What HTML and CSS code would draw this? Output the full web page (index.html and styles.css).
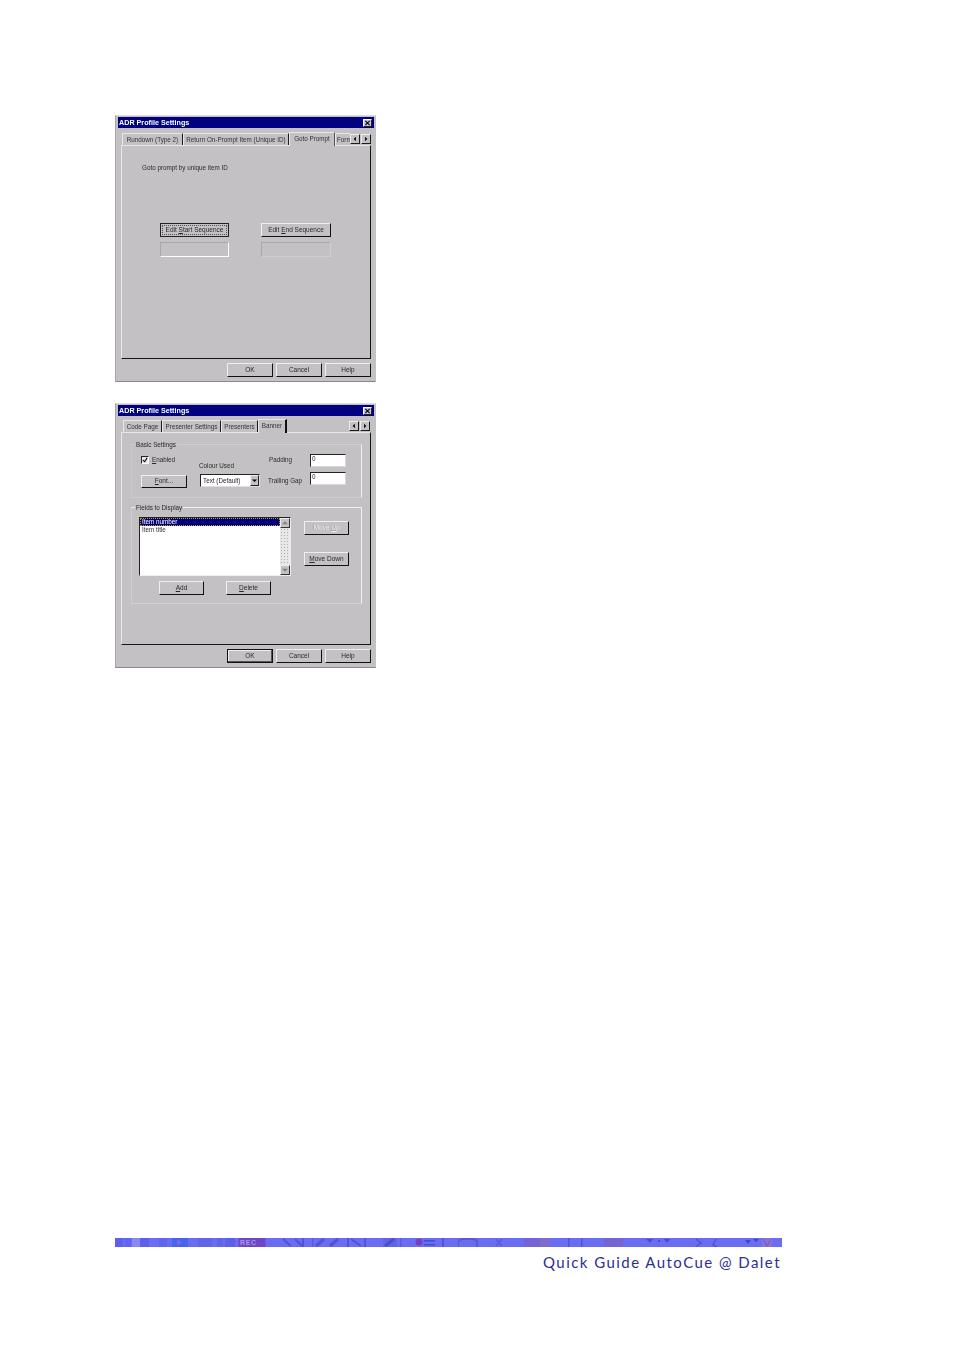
FILE: index.html
```html
<!DOCTYPE html>
<html lang="en">
<head>
<meta charset="utf-8">
<title>Quick Guide AutoCue @ Dalet</title>
<link rel="stylesheet" href="styles.css">
</head>
<body>
<main class="page">
  <section class="dialog dialog-one">
    <div class="titlebar"><span>ADR Profile Settings</span><span class="close"><svg viewBox="0 0 7 7"><path d="M1 1l5 5M6 1l-5 5" stroke="#000" stroke-width="1.2" fill="none"/></svg></span></div>
    <div class="tabs tabs-one">
      <div class="tab w60">Rundown (Type 2)</div>
      <div class="tab w106">Return On-Prompt Item (Unique ID)</div>
      <div class="tab active w45">Goto Prompt</div>
      <div class="tab w15 clipped">Form</div>
      <div class="arrows"><span class="arrow"><svg viewBox="0 0 9 9"><path d="M5.5 2v5L3 4.500z"/></svg></span><span class="arrow"><svg viewBox="0 0 9 9"><path d="M3.500 2v5L6 4.500z"/></svg></span></div>
    </div>
    <div class="panel panel-one">
      <p class="intro">Goto prompt by unique item ID</p>
      <div class="seq-grid">
        <button class="btn focused"><span class="focus-ring"><span>Edit <u>S</u>tart Sequence</span></span></button>
        <button class="btn"><span>Edit <u>E</u>nd Sequence</span></button>
        <div class="seq-field white-edge"></div>
        <div class="seq-field"></div>
      </div>
    </div>
    <div class="footer-buttons">
      <button class="btn b45">OK</button>
      <button class="btn b46">Cancel</button>
      <button class="btn b46">Help</button>
    </div>
  </section>

  <section class="dialog dialog-two">
    <div class="titlebar"><span>ADR Profile Settings</span><span class="close"><svg viewBox="0 0 7 7"><path d="M1 1l5 5M6 1l-5 5" stroke="#000" stroke-width="1.2" fill="none"/></svg></span></div>
    <div class="tabs tabs-two">
      <div class="tab w38">Code Page</div>
      <div class="tab w59">Presenter Settings</div>
      <div class="tab w37">Presenters</div>
      <div class="tab active w29 strong-edge">Banner</div>
      <div class="arrows"><span class="arrow"><svg viewBox="0 0 9 9"><path d="M5.500 2v5L3 4.500z"/></svg></span><span class="arrow"><svg viewBox="0 0 9 9"><path d="M3.500 2v5L6 4.500z"/></svg></span></div>
    </div>
    <div class="panel panel-two">
      <div class="group basic">
        <span class="legend">Basic Settings</span>
        <div class="basic-grid">
          <label class="check"><span class="checkbox"><svg viewBox="0 0 7 7"><path d="M1 3.500l2 2L6 1" stroke="#000" stroke-width="1.200" fill="none"/></svg></span><span><u>E</u>nabled</span></label>
          <span class="colour-label">Colour Used</span>
          <span class="padding-label">Padding</span>
          <div class="input input-a">0</div>
          <button class="btn font-btn"><span><u>F</u>ont...</span></button>
          <div class="select"><span>Text (Default)</span><span class="drop"><svg viewBox="0 0 7 7"><path d="M1 2.500h5L3.500 5z"/></svg></span></div>
          <span class="gap-label">Trailing Gap</span>
          <div class="input input-b">0</div>
        </div>
      </div>
      <div class="group fields">
        <span class="legend">Fields to Display</span>
        <div class="fields-grid">
          <div class="listbox">
            <div class="list-items">
              <div class="item selected">Item number</div>
              <div class="item">Item title</div>
            </div>
            <div class="scroll">
              <span class="sbtn"><svg viewBox="0 0 7 7"><path d="M1 4.500h5L3.500 2z" fill="#808080"/></svg></span>
              <span class="track"></span>
              <span class="sbtn"><svg viewBox="0 0 7 7"><path d="M1 2.500h5L3.500 5z" fill="#808080"/></svg></span>
            </div>
          </div>
          <div class="move-col">
            <button class="btn disabled"><span>Move <u>U</u>p</span></button>
            <button class="btn"><span><u>M</u>ove Down</span></button>
          </div>
          <div class="add-row">
            <button class="btn"><span><u>A</u>dd</span></button>
            <button class="btn"><span><u>D</u>elete</span></button>
          </div>
        </div>
      </div>
    </div>
    <div class="footer-buttons">
      <button class="btn b45 dark-edge">OK</button>
      <button class="btn b46">Cancel</button>
      <button class="btn b46">Help</button>
    </div>
  </section>

  <div class="band">
    <svg viewBox="0 0 667 9" preserveAspectRatio="none">
      <rect width="667" height="9" fill="#6a6cf4"/>
      <g class="band-art">
      <rect x="0" y="-3" width="8" height="15" fill="#5c60ec"/><rect x="10" y="-3" width="6" height="15" fill="#6064ee"/>
      <rect x="17" y="-3" width="8" height="15" fill="#8888f4"/><rect x="25" y="-3" width="9" height="15" fill="#5c60ec"/>
      <rect x="44" y="-3" width="8" height="15" fill="#6064ee"/><rect x="57" y="-3" width="16" height="15" fill="#4464f2"/>
      <path d="M62 1l6 3.500-6 3.500z" fill="#7a66e0"/>
      <rect x="83" y="-3" width="14" height="15" fill="#6064ea"/><rect x="102" y="-3" width="6" height="15" fill="#6064ea"/>
      <rect x="110" y="-3" width="10" height="15" fill="#5c60e8"/>
      <rect x="123.500" y="-3" width="27" height="15" fill="#6f46c8"/>
      <text x="125" y="7" class="rec">REC</text>
      <path d="M168 1l8 7M180 1l7 7" stroke="#5252d8" stroke-width="2" fill="none"/>
      <rect x="187" y="-3" width="2" height="15" fill="#5252d8"/>
      <path d="M201 8l8-7M215 8l8-7" stroke="#5252d8" stroke-width="3" fill="none"/>
      <rect x="197" y="-3" width="1.500" height="15" fill="#5a5ae0"/>
      <path d="M236 1l10 7" stroke="#5252d8" stroke-width="2" fill="none"/>
      <rect x="232" y="-3" width="2" height="15" fill="#5252d8"/><rect x="249" y="-3" width="2" height="15" fill="#5252d8"/>
      <rect x="268" y="-3" width="14" height="15" fill="#6064e8"/><path d="M270 8l9-7" stroke="#4c4cd0" stroke-width="3" fill="none"/>
      <rect x="285" y="-3" width="1.500" height="15" fill="#5a5ae0"/>
      <circle cx="304" cy="4" r="3.500" fill="#7a40bc"/><rect x="309" y="2" width="11" height="1.500" fill="#3a50d8"/><rect x="309" y="6" width="11" height="1.500" fill="#3a50d8"/>
      <rect x="327" y="-3" width="2" height="15" fill="#5252d8"/>
      <path d="M343 9v-5q0-4 6-4h8q6 0 6 4v5h-2v-4q0-3-5-3h-7q-5 0-5 3v4z" fill="#5a5ad0"/>
      <path d="M381 1l6 7M387 1l-6 7" stroke="#5a5ad8" stroke-width="1.500" fill="none"/>
      <rect x="409" y="-3" width="16" height="15" fill="#7464d8"/><rect x="425" y="-3" width="10" height="15" fill="#7e6ccc"/>
      <rect x="453" y="-3" width="1.500" height="15" fill="#5252d8"/><rect x="466" y="-3" width="1.500" height="15" fill="#5252d8"/>
      <rect x="489" y="-3" width="19" height="15" fill="#7464d4"/>
      <path d="M531 1h7l-3 4zM543 2h2v2h-2zM549 1h6l-3 4z" fill="#4a4ad0"/>
      <path d="M581 1l5 4-5 4M601 1l-3 6 4 2" stroke="#5252d8" stroke-width="1.500" fill="none"/>
      <path d="M630 2l3 4 3-4zM638 1l3 3 3-3z" fill="#4444c8"/>
      <rect x="647" y="-3" width="10" height="15" fill="#8a70d8"/><path d="M648 1l4 7 4-7" stroke="#7058cc" fill="none"/>
      </g>
    </svg>
  </div>
  <p class="guide">Quick Guide AutoCue @ Dalet</p>
</main>
</body>
</html>
```

FILE: styles.css
```css
* { box-sizing: border-box; }
html, body { margin: 0; padding: 0; background: #fff; }
body { width: 954px; height: 1351px; overflow: hidden; }
.page { padding: 115px 172px 0 115px; }

button { font: inherit; color: inherit; padding: 0; margin: 0; }

.dialog {
  width: 261px;
  background: #c4c1c4;
  border-left: 1px solid #a8a6a8;
  border-bottom: 1px solid #8a888a;
  border-top: 1px solid #dedcde;
  border-right: 1px solid #c4c1c4;
  padding: 1px 1px 0 1px;
  font-family: "Liberation Sans", Arial, sans-serif;
  font-size: 6.3px;
  line-height: 8px;
  color: #2a2a2a;
  filter: blur(0.35px);
}
.dialog-one { height: 267px; }
.dialog-two { height: 265px; margin-top: 21px; }

.titlebar {
  height: 11px;
  margin-left: 1px;
  background: #000080;
  color: #fff;
  font-weight: 700;
  font-size: 7.2px;
  line-height: 11px;
  padding: 0 2px 0 1px;
  display: flex;
  justify-content: space-between;
  align-items: center;
}
.close {
  width: 9px;
  height: 8px;
  background: #c4c1c4;
  border: 1px solid;
  border-color: #fff #222 #222 #fff;
  display: flex;
}
.close svg { width: 7px; height: 6px; display: block; }

.tabs {
  display: flex;
  align-items: flex-end;
  position: relative;
  z-index: 1;
}
.tabs-one { height: 17px; margin-left: 5px; width: 249px; }
.tabs-two { height: 16px; margin-left: 6px; width: 247px; }
.tab {
  height: 12px;
  border-top: 1px solid #e8e6e8;
  border-left: 1px solid #e8e6e8;
  border-right: 1px solid #1c1c1c;
  text-align: center;
  line-height: 12px;
  white-space: nowrap;
  flex: none;
  color: #333;
}
.tab.active {
  height: 14px;
  margin-bottom: -1px;
  background: #c4c1c4;
  position: relative;
  line-height: 11px;
  border-right-color: #555;
}
.tab.strong-edge { border-right: 2px solid #111; }
.tab.clipped { text-align: left; padding-left: 1px; border-right: 0; }
.w60 { width: 61px; }
.w106 { width: 106px; }
.w45 { width: 46px; }
.w15 { width: 15px; }
.w38 { width: 39px; }
.w59 { width: 59px; }
.w37 { width: 37px; }
.w29 { width: 29px; }

.arrows { display: flex; gap: 1px; margin-left: auto; margin-bottom: 1px; }
.arrow {
  width: 10px;
  height: 10px;
  background: #c4c1c4;
  border: 1px solid;
  border-color: #eee #1c1c1c #1c1c1c #eee;
  display: flex;
}
.arrow svg { width: 8px; height: 8px; display: block; fill: #000; }

.panel {
  margin-left: 4px;
  width: 250px;
  border: 1px solid;
  border-color: #e8e6e8 #151515 #151515 #e8e6e8;
}
.panel-one { height: 214px; padding: 17px 0 0 20px; }
.panel-two { height: 213px; padding: 11px 0 0 9px; }
.intro { margin: 0; line-height: 10px; }

.seq-grid {
  display: grid;
  grid-template-columns: 69px 70px;
  grid-template-rows: 14px 15px;
  column-gap: 32px;
  row-gap: 5px;
  margin: 50px 0 0 18px;
}
.btn {
  display: flex;
  align-items: center;
  justify-content: center;
  background: #c4c1c4;
  border: 1px solid;
  border-color: #f0eef0 #111 #111 #f0eef0;
  font-size: 6.5px;
  line-height: 8px;
  color: #2a2a2a;
  white-space: nowrap;
}
.btn.focused { outline: 1px solid #222; outline-offset: -1px; padding: 1px; }
.focus-ring { border: 1px dotted #555; width: 100%; height: 100%; display: flex; align-items: center; justify-content: center; }
.seq-field { border: 1px solid #a9a7a9; border-right-color: #d0ced0; border-bottom-color: #d0ced0; }
.seq-field.white-edge { border-color: #a9a7a9 #fff #fff #a9a7a9; }

.footer-buttons {
  display: flex;
  gap: 3px;
  justify-content: flex-end;
  padding: 3px 3px 0 0;
  margin-top: 1px;
}
.footer-buttons .btn { height: 14px; }
.b45 { width: 46px; }
.b46 { width: 46px; }
.btn.dark-edge { border-color: #111; box-shadow: inset -1px -1px 0 #555, inset 1px 1px 0 #eee; }

.group {
  position: relative;
  width: 231px;
}
.group.basic {
  height: 54px;
  border: 1px solid;
  border-color: #d0ced0 #f0eef0 #cfcdcf #cac8ca;
}
.group.fields {
  height: 97px;
  margin-top: 9px;
  border: 1px solid;
  border-color: #f2f0f2 #f2f0f2 #d4d2d4 #cfcdcf;
}
.legend {
  position: absolute;
  left: 3px;
  top: -4px;
  background: #c4c1c4;
  padding: 0 1px;
  line-height: 8px;
}

.basic-grid {
  display: grid;
  grid-template-columns: 59px 69px 41px 36px;
  grid-template-rows: 18px 13px;
  margin: 9px 0 0 9px;
  row-gap: 2px;
  align-items: center;
}
.check { display: flex; align-items: center; gap: 3px; align-self: start; margin-top: 2px; }
.checkbox {
  width: 8px; height: 8px;
  background: #e8e6e8;
  border: 1px solid;
  border-color: #222 #fff #fff #222;
  display: flex;
}
.checkbox svg { width: 6px; height: 6px; display: block; }
.colour-label { align-self: end; margin-bottom: 2px; margin-left: -1px; line-height: 8px; }
.padding-label { align-self: start; margin-top: 2px; }
.gap-label { margin-left: -1px; margin-top: 1px; }
.input {
  width: 36px; height: 13px;
  background: #fff;
  border: 1px solid;
  border-color: #222 #d8d6d8 #d8d6d8 #222;
  padding-left: 1px;
  line-height: 8px;
  align-self: start;
}
.input-b { margin-top: -2px; }
.font-btn { width: 46px; height: 13px; margin-top: 1px; }
.select {
  width: 60px; height: 13px;
  background: #fff;
  border: 1px solid;
  border-color: #222 #e0dee0 #e0dee0 #222;
  display: flex;
  align-items: center;
  justify-content: space-between;
  padding-left: 2px;
}
.drop {
  width: 9px; height: 11px;
  background: #c4c1c4;
  border: 1px solid;
  border-color: #eee #222 #222 #eee;
  display: flex;
  align-items: center;
}
.drop svg { width: 7px; height: 7px; display: block; fill: #000; }

.fields-grid {
  display: grid;
  grid-template-columns: 165px 45px;
  grid-template-rows: 59px 14px;
  row-gap: 6px;
  margin: 9px 0 0 7px;
}
.listbox {
  display: flex;
  border: 1px solid;
  border-color: #222 #eee #eee #222;
  background: #fff;
  width: 152px;
}
.list-items { flex: 1; }
.item { height: 8px; line-height: 8px; padding-left: 2px; color: #333; }
.item.selected { background: #000080; color: #fff; outline: 1px dotted #c0a000; outline-offset: -1px; }
.scroll { width: 10px; display: flex; flex-direction: column; }
.sbtn {
  height: 10px;
  background: #c4c1c4;
  border: 1px solid;
  border-color: #eee #333 #333 #eee;
  display: flex;
}
.sbtn svg { width: 8px; height: 8px; display: block; }
.track {
  flex: 1;
  background-color: #e8e6e8;
  background-image: radial-gradient(#b0aeb0 0.7px, transparent 0.8px);
  background-size: 3px 3px;
}
.move-col {
  display: flex;
  flex-direction: column;
  gap: 17px;
  padding-top: 4px;
}
.move-col .btn { height: 14px; width: 45px; }
.btn.disabled { color: #f4f4f4; text-shadow: -0.5px -0.5px 0 #8c8a8c; }
.add-row {
  grid-column: 1 / -1;
  display: flex;
  gap: 22px;
  padding-left: 20px;
  margin-top: -1px;
}
.add-row .btn { width: 45px; height: 14px; }

.band { height: 9px; margin-top: 570px; width: 667px; overflow: hidden; }
.band svg { display: block; width: 667px; height: 9px; overflow: hidden; }
.band-art { filter: blur(0.5px); }
.rec { font-family: "Liberation Sans", Arial, sans-serif; font-size: 7px; font-weight: 700; fill: #a89ae8; letter-spacing: 0.6px; }

.guide {
  margin: 5px 1px 0 0;
  text-align: right;
  font-family: Lato, sans-serif;
  font-size: 15px;
  line-height: 20px;
  letter-spacing: 1.45px;
  color: #2e2e94;
}
```
